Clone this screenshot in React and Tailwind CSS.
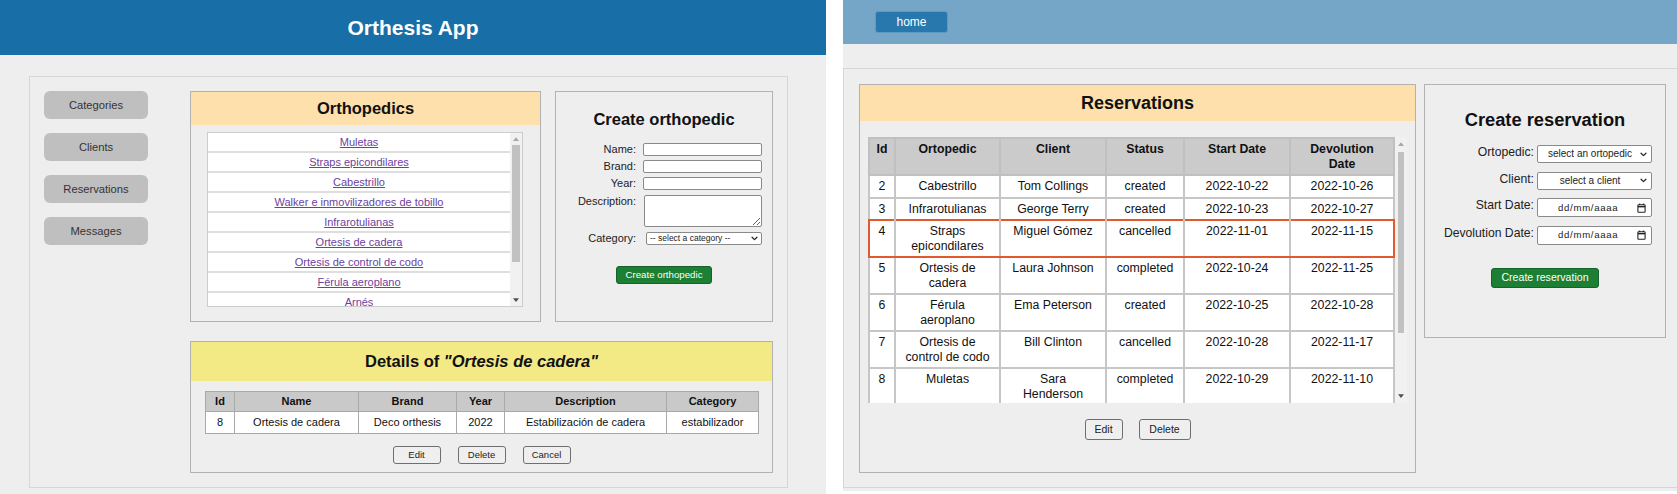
import React from "react";

function Chevron({ className = "" }) {
  return (
    <svg viewBox="0 0 10 6" className={className} fill="none" stroke="currentColor" strokeWidth="1.7" strokeLinecap="round" strokeLinejoin="round">
      <polyline points="1.5,1.2 5,4.6 8.5,1.2" />
    </svg>
  );
}

function CalendarIcon() {
  return (
    <svg viewBox="0 0 10 11" className="w-[9px] h-[10px]" fill="none" stroke="#222" strokeWidth="1.2">
      <rect x="1" y="1.8" width="8" height="8.4" rx="0.8" />
      <line x1="1" y1="4" x2="9" y2="4" strokeWidth="1.6" />
      <line x1="3" y1="0.5" x2="3" y2="2.2" />
      <line x1="7" y1="0.5" x2="7" y2="2.2" />
    </svg>
  );
}

function Arrow({ up, disabled, size = 12 }) {
  return (
    <div className={size === 12 ? "h-[12px] flex items-center justify-center" : "h-[14px] flex items-center justify-center"}>
      <svg viewBox="0 0 8 5" className="w-[6px] h-[4px]" fill={disabled ? "#a8a8a8" : "#505050"}>
        {up ? <polygon points="4,0 8,5 0,5" /> : <polygon points="0,0 8,0 4,5" />}
      </svg>
    </div>
  );
}

const orthopedics = [
  "Muletas",
  "Straps epicondilares",
  "Cabestrillo",
  "Walker e inmovilizadores de tobillo",
  "Infrarotulianas",
  "Ortesis de cadera",
  "Ortesis de control de codo",
  "Férula aeroplano",
  "Arnés",
];

const reservations = [
  { id: 2, orto: ["Cabestrillo"], client: ["Tom Collings"], status: "created", start: "2022-10-22", dev: "2022-10-26" },
  { id: 3, orto: ["Infrarotulianas"], client: ["George Terry"], status: "created", start: "2022-10-23", dev: "2022-10-27" },
  { id: 4, orto: ["Straps", "epicondilares"], client: ["Miguel Gómez"], status: "cancelled", start: "2022-11-01", dev: "2022-11-15", hl: true },
  { id: 5, orto: ["Ortesis de", "cadera"], client: ["Laura Johnson"], status: "completed", start: "2022-10-24", dev: "2022-11-25" },
  { id: 6, orto: ["Férula", "aeroplano"], client: ["Ema Peterson"], status: "created", start: "2022-10-25", dev: "2022-10-28" },
  { id: 7, orto: ["Ortesis de", "control de codo"], client: ["Bill Clinton"], status: "cancelled", start: "2022-10-28", dev: "2022-11-17" },
  { id: 8, orto: ["Muletas"], client: ["Sara", "Henderson"], status: "completed", start: "2022-10-29", dev: "2022-11-10" },
];

function Lines({ parts }) {
  return parts.map((p, i) => (
    <React.Fragment key={i}>
      {i > 0 && <br />}
      {p}
    </React.Fragment>
  ));
}

function LeftPage() {
  return (
    <div className="w-[826px] h-[494px] shrink-0 flex flex-col bg-[#eeeeee]">
      <div className="h-[55px] shrink-0 bg-[#186ea6] flex items-center justify-center text-white font-bold text-[21px]">
        Orthesis App
      </div>
      <div className="pl-[29px] pr-[38px] pt-[21px]">
        <div className="h-[412px] border border-[#d6d6d6] p-[14px] flex">
          {/* sidebar */}
          <div className="w-[104px] flex flex-col gap-[14px]">
            {["Categories", "Clients", "Reservations", "Messages"].map((t) => (
              <div key={t} className="h-[28px] rounded-[6px] bg-[#bfbfbf] flex items-center justify-center text-[11.2px] text-[#333]">
                {t}
              </div>
            ))}
          </div>
          {/* main */}
          <div className="ml-auto w-[583px] flex flex-col">
            <div className="flex gap-[14px] h-[231px]">
              {/* Orthopedics */}
              <div className="w-[351px] border border-[#b2b2b2] flex flex-col">
                <div className="h-[33px] bg-[#fde0ab] flex items-center justify-center font-bold text-[16.5px] text-[#111]">
                  Orthopedics
                </div>
                <div className="mt-[7px] ml-[16px] w-[316px] h-[175px] border border-[#cccccc] bg-white flex overflow-hidden">
                  <div className="flex-1 flex flex-col">
                    {orthopedics.map((o) => (
                      <div key={o} className="h-[20px] shrink-0 border-b-2 border-[#dedede] flex items-center justify-center text-[11px] text-[#6d3fa0] underline">
                        {o}
                      </div>
                    ))}
                  </div>
                  <div className="w-[12px] bg-[#f1f1f1] flex flex-col">
                    <Arrow up disabled />
                    <div className="mx-[2px] h-[117px] bg-[#c1c1c1]" />
                    <div className="flex-1" />
                    <Arrow />
                  </div>
                </div>
              </div>
              {/* Create orthopedic */}
              <div className="w-[218px] border border-[#b2b2b2] flex flex-col items-center">
                <div className="mt-[18px] font-bold text-[16.5px] leading-[19px] text-[#111]">Create orthopedic</div>
                <div className="self-start mt-[14px] grid grid-cols-[80px_119px] gap-x-[7px] gap-y-[4px] text-[11px] leading-[13px] text-[#222]">
                  <div className="text-right">Name:</div>
                  <input className="h-[13px] w-[119px] border border-[#8a8a8a] rounded-[2px] bg-white" />
                  <div className="text-right">Brand:</div>
                  <input className="h-[13px] w-[119px] border border-[#8a8a8a] rounded-[2px] bg-white" />
                  <div className="text-right">Year:</div>
                  <input className="h-[13px] w-[119px] border border-[#8a8a8a] rounded-[2px] bg-white" />
                  <div className="text-right mt-[1px]">Description:</div>
                  <textarea className="mt-[1px] ml-[1px] h-[32px] w-[118px] border border-[#8a8a8a] rounded-[2px] bg-white resize-y" />
                  <div className="text-right mt-[1px]">Category:</div>
                  <div className="mt-[1px] ml-[3px] h-[13px] w-[116px] border border-[#8a8a8a] rounded-[2px] bg-white flex items-center pl-[3px] pr-[3px] text-[8.5px] text-[#222]">
                    <span className="flex-1">-- select a category --</span>
                    <Chevron className="w-[7px] h-[5px] text-[#222]" />
                  </div>
                </div>
                <div className="mt-[21px] w-[96px] h-[18px] rounded-[3px] bg-[#1c7f34] border border-[#14632a] flex items-center justify-center text-white text-[9.7px]">
                  Create orthopedic
                </div>
              </div>
            </div>
            {/* Details */}
            <div className="mt-[19px] h-[132px] border border-[#b2b2b2] flex flex-col">
              <div className="h-[39px] bg-[#f3ea86] flex items-center justify-center font-bold text-[16.5px] text-[#111]">
                Details of&nbsp;<em>"Ortesis de cadera"</em>
              </div>
              <div className="mt-[10px] ml-[14px]">
                <table className="border-collapse table-fixed w-[553px] text-[11px] leading-[13px] text-[#111] text-center">
                  <colgroup>
                    <col className="w-[29px]" />
                    <col className="w-[124px]" />
                    <col className="w-[98px]" />
                    <col className="w-[48px]" />
                    <col className="w-[162px]" />
                    <col className="w-[92px]" />
                  </colgroup>
                  <thead>
                    <tr className="bg-[#c9c9c9]">
                      {["Id", "Name", "Brand", "Year", "Description", "Category"].map((h) => (
                        <th key={h} className="border border-[#a9a9a9] py-[3px] font-bold">{h}</th>
                      ))}
                    </tr>
                  </thead>
                  <tbody>
                    <tr className="bg-white">
                      {["8", "Ortesis de cadera", "Deco orthesis", "2022", "Estabilización de cadera", "estabilizador"].map((c, i) => (
                        <td key={i} className="border border-[#a9a9a9] py-[4px]">{c}</td>
                      ))}
                    </tr>
                  </tbody>
                </table>
              </div>
              <div className="mt-[12px] flex justify-center gap-[17px]">
                {["Edit", "Delete", "Cancel"].map((b) => (
                  <div key={b} className="w-[48px] h-[18px] rounded-[3px] bg-[#efefef] border border-[#6f6f6f] flex items-center justify-center text-[9.5px] text-[#222]">
                    {b}
                  </div>
                ))}
              </div>
            </div>
          </div>
        </div>
      </div>
    </div>
  );
}

const GRAY = "#c6c6c6";

function cellBorder(r, i, last) {
  if (!r.hl) return "border-2 border-[#c6c6c6]";
  let cls = "border-2 border-double border-t-[#e1592c] border-b-[#e1592c]";
  cls += i === 0 ? " border-l-[#e1592c]" : " border-l-[#c6c6c6]";
  cls += last ? " border-r-[#e1592c]" : " border-r-[#c6c6c6]";
  return cls;
}

function RightPage() {
  return (
    <div className="flex-1 h-[491px] bg-[#eeeeee] flex flex-col overflow-hidden">
      <div className="h-[44px] shrink-0 bg-[#76a6c7] pl-[32px] pt-[11px]">
        <div className="w-[73px] h-[22px] rounded-[3px] bg-[#2878ad] border border-[#5c9ac4] flex items-center justify-center text-white text-[12px]">
          home
        </div>
      </div>
      <div className="mt-[24px] h-[420px] w-[900px] border-l border-t border-b border-[#d6d6d6] pl-[15px] pt-[15px] flex items-start gap-[8px]">
        {/* Reservations */}
        <div className="w-[557px] h-[389px] shrink-0 border border-[#b2b2b2] flex flex-col">
          <div className="h-[36px] bg-[#fde0ab] flex items-center justify-center font-bold text-[18px] text-[#111]">
            Reservations
          </div>
          <div className="mt-[16px] ml-[8px] w-[539px] h-[266px] flex overflow-hidden">
            <table className="border-collapse table-fixed w-[525px] self-start text-[12.3px] leading-[14.5px] text-[#111] text-center">
              <colgroup>
                <col className="w-[26px]" />
                <col className="w-[105px]" />
                <col className="w-[106px]" />
                <col className="w-[78px]" />
                <col className="w-[106px]" />
                <col className="w-[104px]" />
              </colgroup>
              <thead>
                <tr className="bg-[#cbcbcb]">
                  <th className="border-2 border-[#c0c0c0] py-[3px] align-top font-bold">Id</th>
                  <th className="border-2 border-[#c0c0c0] py-[3px] align-top font-bold">Ortopedic</th>
                  <th className="border-2 border-[#c0c0c0] py-[3px] align-top font-bold">Client</th>
                  <th className="border-2 border-[#c0c0c0] py-[3px] align-top font-bold">Status</th>
                  <th className="border-2 border-[#c0c0c0] py-[3px] align-top font-bold">Start Date</th>
                  <th className="border-2 border-[#c0c0c0] py-[3px] align-top font-bold">Devolution<br />Date</th>
                </tr>
              </thead>
              <tbody>
                {reservations.map((r) => {
                  const cells = [
                    [String(r.id)],
                    r.orto,
                    r.client,
                    [r.status],
                    [r.start],
                    [r.dev],
                  ];
                  return (
                    <tr key={r.id} className="bg-white">
                      {cells.map((c, i) => (
                        <td key={i} className={cellBorder(r, i, i === cells.length - 1) + " py-[3px] align-top whitespace-nowrap"}>
                          <Lines parts={c} />
                        </td>
                      ))}
                    </tr>
                  );
                })}
              </tbody>
            </table>
            <div className="w-[14px] h-[266px] bg-[#f1f1f1] flex flex-col">
              <Arrow up disabled size={14} />
              <div className="mx-[3px] mt-[1px] h-[181px] bg-[#c1c1c1]" />
              <div className="flex-1" />
              <Arrow size={14} />
            </div>
          </div>
          <div className="mt-[16px] flex justify-center gap-[16px]">
            <div className="w-[38px] h-[21px] rounded-[3px] bg-[#efefef] border border-[#6f6f6f] flex items-center justify-center text-[10.5px] text-[#222]">Edit</div>
            <div className="w-[52px] h-[21px] rounded-[3px] bg-[#efefef] border border-[#6f6f6f] flex items-center justify-center text-[10.5px] text-[#222]">Delete</div>
          </div>
        </div>
        {/* Create reservation */}
        <div className="w-[242px] h-[254px] shrink-0 border border-[#b2b2b2] flex flex-col items-center">
          <div className="mt-[24px] font-bold text-[18.3px] leading-[21px] text-[#111]">Create reservation</div>
          <div className="self-start mt-[15px] grid grid-cols-[109px_115px] gap-x-[3px] gap-y-[8.5px] text-[12.2px] leading-[14px] text-[#222]">
            <div className="text-right">Ortopedic:</div>
            <div className="h-[18px] border border-[#8a8a8a] rounded-[2px] bg-white flex items-center pl-[4px] pr-[4px] text-[10px]">
              <span className="flex-1 text-center">select an ortopedic</span>
              <Chevron className="w-[7px] h-[5px] ml-[2px] text-[#222]" />
            </div>
            <div className="text-right">Client:</div>
            <div className="h-[18px] border border-[#8a8a8a] rounded-[2px] bg-white flex items-center pl-[4px] pr-[4px] text-[10px]">
              <span className="flex-1 text-center">select a client</span>
              <Chevron className="w-[7px] h-[5px] ml-[2px] text-[#222]" />
            </div>
            <div className="text-right">Start Date:</div>
            <div className="h-[19px] border border-[#8a8a8a] rounded-[2px] bg-white flex items-center pl-[20px] pr-[5px] text-[9.6px] tracking-[0.7px]">
              <span className="flex-1">dd/mm/aaaa</span>
              <CalendarIcon />
            </div>
            <div className="text-right">Devolution Date:</div>
            <div className="h-[19px] border border-[#8a8a8a] rounded-[2px] bg-white flex items-center pl-[20px] pr-[5px] text-[9.6px] tracking-[0.7px]">
              <span className="flex-1">dd/mm/aaaa</span>
              <CalendarIcon />
            </div>
          </div>
          <div className="mt-[23px] w-[108px] h-[20px] rounded-[3px] bg-[#1c7f34] border border-[#14632a] flex items-center justify-center text-white text-[10.6px]">
            Create reservation
          </div>
        </div>
      </div>
    </div>
  );
}

export default function App() {
  return (
    <div className="flex w-[1677px] h-[494px] bg-white overflow-hidden font-['Liberation_Sans',Arial,sans-serif]">
      <LeftPage />
      <div className="w-[17px] shrink-0" />
      <RightPage />
    </div>
  );
}
